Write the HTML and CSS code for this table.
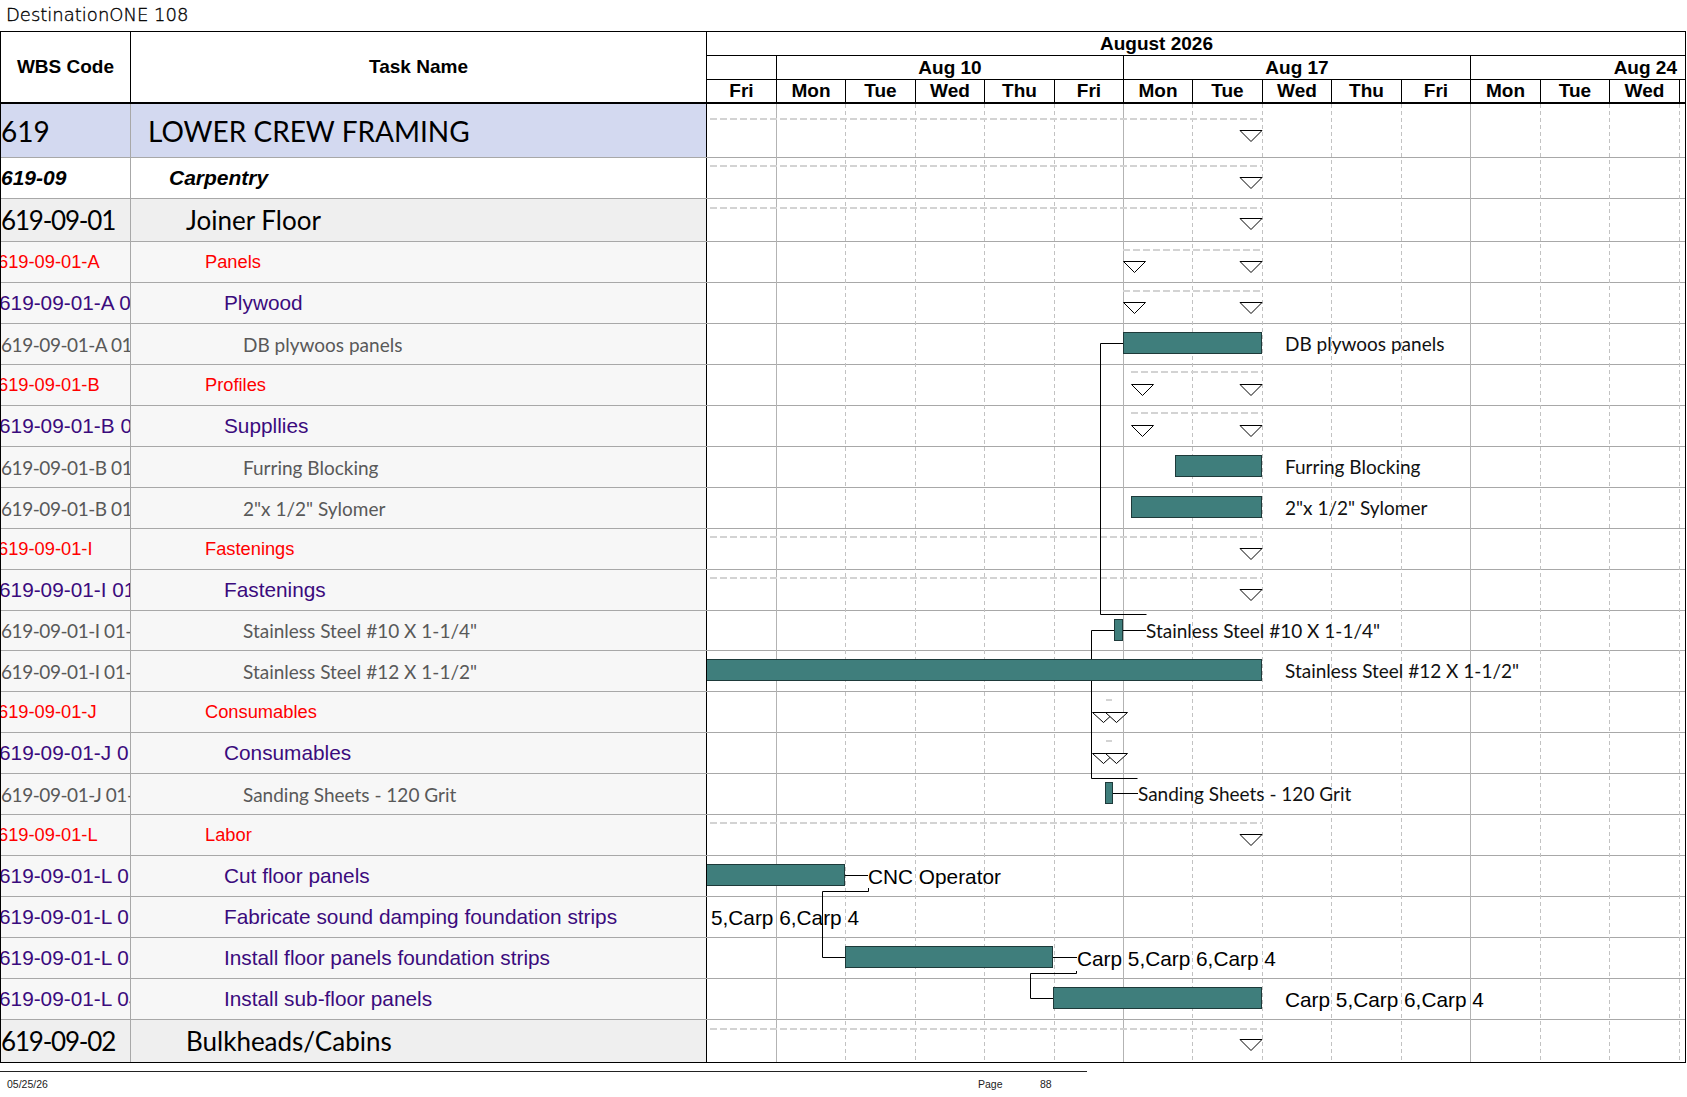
FILE: index.html
```html
<!DOCTYPE html>
<html>
<head>
<meta charset="utf-8">
<title>DestinationONE 108</title>
<link rel="stylesheet" href="styles.css">
</head>
<body>
<div class="title">DestinationONE 108</div>
<div class="sheet">
  <div class="head">
    <div class="h-cell h-wbs">WBS Code</div>
    <div class="h-cell h-task">Task Name</div>
    <div class="h-time">
      <div class="tier month"><span>August 2026</span></div>
      <div class="tier weeks">
        <div class="wk"></div>
        <div class="wk">Aug 10</div>
        <div class="wk">Aug 17</div>
        <div class="wk wk-last">Aug 24</div>
      </div>
      <div class="tier days">
        <div class="day">Fri</div><div class="day">Mon</div><div class="day">Tue</div><div class="day">Wed</div><div class="day">Thu</div><div class="day">Fri</div>
        <div class="day">Mon</div><div class="day">Tue</div><div class="day">Wed</div><div class="day">Thu</div><div class="day">Fri</div>
        <div class="day">Mon</div><div class="day">Tue</div><div class="day">Wed</div><div class="day day-tail"></div>
      </div>
    </div>
  </div>

  <div class="body">
    <div class="row h54 lav"><div class="cell wbs t-top">619</div><div class="cell task lv0 t-top">LOWER CREW FRAMING</div><div class="chart"></div></div>
    <div class="row h41 wht"><div class="cell wbs t-bi">619-09</div><div class="cell task lv1 t-bi">Carpentry</div><div class="chart"></div></div>
    <div class="row h43 gry"><div class="cell wbs t-big tight">619-09-01</div><div class="cell task lv2 t-big">Joiner Floor</div><div class="chart"></div></div>
    <div class="row h41 std"><div class="cell wbs t-red"><span class="shift-r">619-09-01-A</span></div><div class="cell task lv3 t-red">Panels</div><div class="chart"></div></div>
    <div class="row h41 std"><div class="cell wbs t-pur"><span class="shift-p">619-09-01-A 01</span></div><div class="cell task lv4 t-pur">Plywood</div><div class="chart"></div></div>
    <div class="row h41 std"><div class="cell wbs t-gry tight-s">619-09-01-A 01-01</div><div class="cell task lv5 t-gry">DB plywoos panels</div><div class="chart"></div></div>
    <div class="row h41 std"><div class="cell wbs t-red"><span class="shift-r">619-09-01-B</span></div><div class="cell task lv3 t-red">Profiles</div><div class="chart"></div></div>
    <div class="row h41 std"><div class="cell wbs t-pur"><span class="shift-p">619-09-01-B 01</span></div><div class="cell task lv4 t-pur">Suppllies</div><div class="chart"></div></div>
    <div class="row h41 std"><div class="cell wbs t-gry tight-s">619-09-01-B 01-01</div><div class="cell task lv5 t-gry">Furring Blocking</div><div class="chart"></div></div>
    <div class="row h41 std"><div class="cell wbs t-gry tight-s">619-09-01-B 01-02</div><div class="cell task lv5 t-gry">2"x 1/2" Sylomer</div><div class="chart"></div></div>
    <div class="row h41 std"><div class="cell wbs t-red"><span class="shift-r">619-09-01-I</span></div><div class="cell task lv3 t-red">Fastenings</div><div class="chart"></div></div>
    <div class="row h41 std"><div class="cell wbs t-pur"><span class="shift-p">619-09-01-I 01</span></div><div class="cell task lv4 t-pur">Fastenings</div><div class="chart"></div></div>
    <div class="row h40 std"><div class="cell wbs t-gry tight-s">619-09-01-I 01-01</div><div class="cell task lv5 t-gry">Stainless Steel #10 X 1-1/4"</div><div class="chart"></div></div>
    <div class="row h41 std"><div class="cell wbs t-gry tight-s">619-09-01-I 01-02</div><div class="cell task lv5 t-gry">Stainless Steel #12 X 1-1/2"</div><div class="chart"></div></div>
    <div class="row h41 std"><div class="cell wbs t-red"><span class="shift-r">619-09-01-J</span></div><div class="cell task lv3 t-red">Consumables</div><div class="chart"></div></div>
    <div class="row h41 std"><div class="cell wbs t-pur"><span class="shift-p">619-09-01-J 01</span></div><div class="cell task lv4 t-pur">Consumables</div><div class="chart"></div></div>
    <div class="row h41 std"><div class="cell wbs t-gry tight-s">619-09-01-J 01-01</div><div class="cell task lv5 t-gry">Sanding Sheets - 120 Grit</div><div class="chart"></div></div>
    <div class="row h41 std"><div class="cell wbs t-red"><span class="shift-r">619-09-01-L</span></div><div class="cell task lv3 t-red">Labor</div><div class="chart"></div></div>
    <div class="row h41 std"><div class="cell wbs t-pur"><span class="shift-p">619-09-01-L 01</span></div><div class="cell task lv4 t-pur">Cut floor panels</div><div class="chart"></div></div>
    <div class="row h41 std"><div class="cell wbs t-pur"><span class="shift-p">619-09-01-L 02</span></div><div class="cell task lv4 t-pur">Fabricate sound damping foundation strips</div><div class="chart"></div></div>
    <div class="row h41 std"><div class="cell wbs t-pur"><span class="shift-p">619-09-01-L 03</span></div><div class="cell task lv4 t-pur">Install floor panels foundation strips</div><div class="chart"></div></div>
    <div class="row h41 std"><div class="cell wbs t-pur"><span class="shift-p">619-09-01-L 04</span></div><div class="cell task lv4 t-pur">Install sub-floor panels</div><div class="chart"></div></div>
    <div class="row h42 gry last"><div class="cell wbs t-big tight">619-09-02</div><div class="cell task lv2 t-big">Bulkheads/Cabins</div><div class="chart"></div></div>

    <svg class="gantt" width="978" height="958" viewBox="0 0 978 958">
      <g class="grid-d">
        <line x1="138.5" y1="0" x2="138.5" y2="958"/>
        <line x1="208.5" y1="0" x2="208.5" y2="958"/>
        <line x1="277.5" y1="0" x2="277.5" y2="958"/>
        <line x1="347.5" y1="0" x2="347.5" y2="958"/>
        <line x1="485.5" y1="0" x2="485.5" y2="958"/>
        <line x1="555.5" y1="0" x2="555.5" y2="958"/>
        <line x1="624.5" y1="0" x2="624.5" y2="958"/>
        <line x1="694.5" y1="0" x2="694.5" y2="958"/>
        <line x1="833.5" y1="0" x2="833.5" y2="958"/>
        <line x1="902.5" y1="0" x2="902.5" y2="958"/>
        <line x1="972.5" y1="0" x2="972.5" y2="958"/>
      </g>
      <g class="grid-s">
        <line x1="69.5" y1="0" x2="69.5" y2="958"/>
        <line x1="416.5" y1="0" x2="416.5" y2="958"/>
        <line x1="763.5" y1="0" x2="763.5" y2="958"/>
      </g>

      <g class="sum">
        <line x1="3" y1="15" x2="555" y2="15"/>
        <line x1="3" y1="62" x2="555" y2="62"/>
        <line x1="3" y1="104" x2="555" y2="104"/>
        <line x1="416" y1="146" x2="555" y2="146"/>
        <line x1="416" y1="187" x2="555" y2="187"/>
        <line x1="424" y1="268" x2="555" y2="268"/>
        <line x1="424" y1="309" x2="555" y2="309"/>
        <line x1="3" y1="433" x2="555" y2="433"/>
        <line x1="3" y1="474" x2="555" y2="474"/>
        <line x1="399" y1="596" x2="405" y2="596"/>
        <line x1="399" y1="637" x2="405" y2="637"/>
        <line x1="3" y1="719" x2="555" y2="719"/>
        <line x1="3" y1="925" x2="555" y2="925"/>
      </g>

      <g class="tri">
        <polygon points="533,26.5 555,26.5 544,37.5"/>
        <polygon points="533,73.5 555,73.5 544,84.5"/>
        <polygon points="533,114.5 555,114.5 544,125.5"/>
        <polygon points="416.5,157.5 438.5,157.5 427.5,168.5"/>
        <polygon points="533,157.5 555,157.5 544,168.5"/>
        <polygon points="416.5,198.5 438.5,198.5 427.5,209.5"/>
        <polygon points="533,198.5 555,198.5 544,209.5"/>
        <polygon points="424.5,280.5 446.5,280.5 435.5,291.5"/>
        <polygon points="533,280.5 555,280.5 544,291.5"/>
        <polygon points="424.5,321.5 446.5,321.5 435.5,332.5"/>
        <polygon points="533,321.5 555,321.5 544,332.5"/>
        <polygon points="533,444.5 555,444.5 544,455.5"/>
        <polygon points="533,485.5 555,485.5 544,496.5"/>
        <polygon points="385.5,608.5 407.5,608.5 396.5,618.5"/>
        <polygon points="398.5,608.5 420.5,608.5 409.5,618.5"/>
        <polygon points="385.5,649.5 407.5,649.5 396.5,659.5"/>
        <polygon points="398.5,649.5 420.5,649.5 409.5,659.5"/>
        <polygon points="533,730.5 555,730.5 544,741.5"/>
        <polygon points="533,935.5 555,935.5 544,946.5"/>
      </g>

      <g class="ln">
        <polyline points="416,239.5 393.5,239.5 393.5,510.5 439.5,510.5"/>
        <line x1="415" y1="526.5" x2="439" y2="526.5"/>
        <polyline points="407.5,526.5 384.5,526.5 384.5,674.5 430.5,674.5"/>
        <line x1="405" y1="689.5" x2="431" y2="689.5"/>
        <line x1="137" y1="771.5" x2="161" y2="771.5"/>
        <polyline points="161.5,784 161.5,787.5 115.5,787.5 115.5,853.5 138.5,853.5"/>
        <line x1="345" y1="853.5" x2="370" y2="853.5"/>
        <polyline points="369.5,867 369.5,869.5 323.5,869.5 323.5,894.5 346.5,894.5"/>
      </g>

      <g class="bar">
        <rect x="416.5" y="228.5" width="138" height="21"/>
        <rect x="468.5" y="351.5" width="86" height="21"/>
        <rect x="424.5" y="392.5" width="130" height="21"/>
        <rect x="407.5" y="515.5" width="8" height="21"/>
        <rect x="-5.5" y="555.5" width="560" height="21"/>
        <rect x="398.5" y="678.5" width="7" height="21"/>
        <rect x="-5.5" y="760.5" width="143" height="21"/>
        <rect x="138.5" y="842.5" width="207" height="21"/>
        <rect x="346.5" y="883.5" width="208" height="21"/>
      </g>

      <text class="lbl-c" x="578" y="247">DB plywoos panels</text>
      <text class="lbl-c" x="578" y="370">Furring Blocking</text>
      <text class="lbl-c" x="578" y="411">2"x 1/2" Sylomer</text>
      <text class="lbl-c" x="439" y="534">Stainless Steel #10 X 1-1/4"</text>
      <text class="lbl-c" x="578" y="574">Stainless Steel #12 X 1-1/2"</text>
      <text class="lbl-c" x="431" y="697">Sanding Sheets - 120 Grit</text>
      <text class="lbl-a" x="161" y="779.5">CNC Operator</text>
      <text class="lbl-a" x="4" y="821">5,Carp 6,Carp 4</text>
      <text class="lbl-a" x="370" y="861.5">Carp 5,Carp 6,Carp 4</text>
      <text class="lbl-a" x="578" y="902.5">Carp 5,Carp 6,Carp 4</text>
    </svg>
  </div>
</div>
<div class="footer">
  <span>05/25/26</span>
  <span>Page</span>
  <span>88</span>
</div>
</body>
</html>
```

FILE: styles.css
```css
* { box-sizing: border-box; }

body {
  margin: 0;
  background: #fff;
  font-family: "Liberation Sans", Arial, sans-serif;
  color: #000;
}

.title {
  height: 31px;
  padding-left: 6px;
  font-family: "DejaVu Sans", sans-serif;
  font-weight: 200;
  font-size: 18px;
  line-height: 30px;
  color: #000;
  -webkit-text-stroke: 0.35px #000;
  white-space: nowrap;
}

.sheet {
  width: 1686px;
  border: 1px solid #000;
}

/* ---------- header ---------- */
.head {
  display: grid;
  grid-template-columns: 130px 576px 1fr;
  height: 72px;
  border-bottom: 2px solid #000;
}

.h-cell {
  display: flex;
  align-items: center;
  justify-content: center;
  font-weight: bold;
  font-size: 19px;
  border-right: 1px solid #000;
}

.h-time {
  display: flex;
  flex-direction: column;
  font-weight: bold;
  font-size: 19px;
  white-space: nowrap;
}

.tier {
  border-bottom: 1px solid #000;
}

.month {
  height: 24px;
  line-height: 23px;
  padding-left: 393px;
}

.weeks {
  height: 24px;
  display: grid;
  grid-template-columns: 70px 347px 347px 1fr;
}

.wk {
  border-right: 1px solid #000;
  text-align: center;
  line-height: 23px;
}

.wk-last {
  border-right: 0;
  text-align: right;
  padding-right: 8px;
}

.days {
  height: 22px;
  border-bottom: 0;
  display: grid;
  grid-template-columns: 70px 69px 70px 69px 70px 69px 69px 70px 69px 70px 69px 70px 69px 70px 1fr;
}

.day {
  border-right: 1px solid #000;
  text-align: center;
  line-height: 22px;
}

.day-tail { border-right: 0; }

/* ---------- body ---------- */
.body {
  position: relative;
}

.row {
  display: grid;
  grid-template-columns: 130px 576px 1fr;
  border-bottom: 1px solid #a8a8a8;
}

.row.last { border-bottom: 0; }

.h54 { height: 54px; }
.h41 { height: 41px; }
.h43 { height: 43px; }
.h40 { height: 40px; }
.h42 { height: 42px; }

.cell {
  display: flex;
  align-items: center;
  overflow: hidden;
  white-space: nowrap;
}

.wbs { border-right: 1px solid #a8a8a8; }
.task { border-right: 1px solid #000; }
.chart { background: #fff; }

.lav .cell { background: #d3d9f0; }
.gry .cell { background: #efefef; }
.std .cell { background: #f7f7f7; }
.wht .cell { background: #fff; }

.shift-r { margin-left: -3px; }
.shift-p { margin-left: -2px; }
.tight { letter-spacing: -1.2px; }
.tight-s { letter-spacing: -0.45px; }

.lv0 { padding-left: 17px; }
.lv1 { padding-left: 38px; }
.lv2 { padding-left: 55px; }
.lv3 { padding-left: 74px; }
.lv4 { padding-left: 93px; }
.lv5 { padding-left: 112px; }

.t-top { font-family: Lato, "Open Sans", sans-serif; font-size: 28px; color: #000; }
.t-big { font-family: Lato, "Open Sans", sans-serif; font-size: 26px; color: #000; }
.t-bi  { font-family: "Liberation Sans", Arial, sans-serif; font-weight: bold; font-style: italic; font-size: 21px; color: #000; }
.t-red { font-family: "Liberation Sans", Arial, sans-serif; font-size: 18.3px; color: #f00; }
.t-pur { font-family: "Liberation Sans", Arial, sans-serif; font-size: 20.8px; color: #3b0b7d; }
.t-gry { font-family: Lato, "Open Sans", sans-serif; font-size: 19px; color: #595959; }

/* ---------- gantt canvas ---------- */
.gantt {
  position: absolute;
  left: 706px;
  top: 0;
  overflow: hidden;
  pointer-events: none;
}

.grid-d line { stroke: #c2c2c2; stroke-width: 1; stroke-dasharray: 4 3; }
.grid-s line { stroke: #b3b3b3; stroke-width: 1; }
.sum line { stroke: #d3d3d3; stroke-width: 2; stroke-dasharray: 7 3; }
.tri polygon { fill: #fff; stroke: #000; stroke-width: 1; }
.ln line, .ln polyline { stroke: #000; stroke-width: 1; fill: none; }
.bar rect { fill: #3f7e7c; stroke: #1e3a3a; stroke-width: 1; }

.lbl-c { font-family: Lato, "Open Sans", sans-serif; font-size: 19px; fill: #111; }
.lbl-a { font-family: "Liberation Sans", Arial, sans-serif; font-size: 20.8px; fill: #000; }

/* ---------- footer ---------- */
.footer {
  width: 1087px;
  margin-top: 8px;
  border-top: 1px solid #222;
  display: grid;
  grid-template-columns: 971px 62px 1fr;
  padding-left: 7px;
  padding-top: 6px;
  font-size: 10.5px;
  line-height: 12px;
  color: #222;
}
```
